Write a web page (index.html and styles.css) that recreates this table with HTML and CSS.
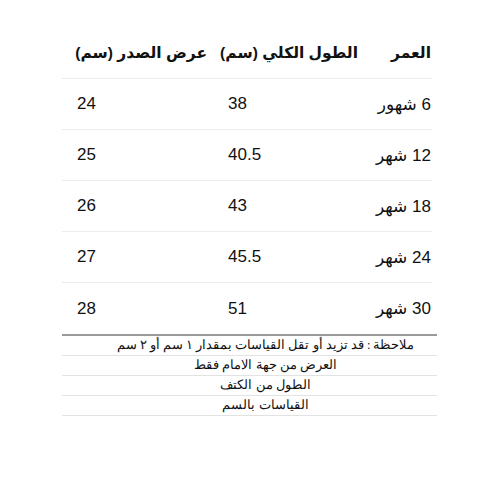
FILE: index.html
```html
<!DOCTYPE html>
<html lang="ar">
<head>
<meta charset="utf-8">
<link rel="stylesheet" href="styles.css">
</head>
<body>
<div class="page">
  <div class="sizes">
    <div class="row head">
      <div class="c1 ar">عرض الصدر (سم)</div>
      <div class="c2 ar">الطول الكلي (سم)</div>
      <div class="c3 ar">العمر</div>
    </div>
    <div class="row">
      <div class="c1">24</div>
      <div class="c2">38</div>
      <div class="c3 ar">6 شهور</div>
    </div>
    <div class="row">
      <div class="c1">25</div>
      <div class="c2">40.5</div>
      <div class="c3 ar">12 شهر</div>
    </div>
    <div class="row">
      <div class="c1">26</div>
      <div class="c2">43</div>
      <div class="c3 ar">18 شهر</div>
    </div>
    <div class="row">
      <div class="c1">27</div>
      <div class="c2">45.5</div>
      <div class="c3 ar">24 شهر</div>
    </div>
    <div class="row last">
      <div class="c1">28</div>
      <div class="c2">51</div>
      <div class="c3 ar">30 شهر</div>
    </div>
  </div>
  <div class="notes" dir="rtl">
    <div class="note">ملاحظة : قد تزيد أو تقل القياسات بمقدار ١ سم أو ٢ سم</div>
    <div class="note">العرض من جهة الامام فقط</div>
    <div class="note">الطول من الكتف</div>
    <div class="note">القياسات بالسم</div>
  </div>
</div>
</body>
</html>
```
FILE: styles.css
```css
html, body {
  margin: 0;
  padding: 0;
  background: #ffffff;
}
.page {
  padding: 28px 0 0 62px;
  width: 375px;
}
.sizes {
  width: 370px;
  font-family: "Liberation Sans", "DejaVu Sans", sans-serif;
  font-size: 17px;
  color: #111;
}
.row {
  display: grid;
  grid-template-columns: 151px 151px 68px;
  height: 50px;
  align-items: center;
  border-bottom: 1px solid #ececec;
}
.row.last {
  border-bottom: none;
  height: 51px;
}
.head {
  font-weight: bold;
  font-size: 15.5px;
  white-space: nowrap;
}
.c1, .c2 {
  padding-left: 15px;
  padding-right: 6px;
}
.c3 {
  padding-right: 1px;
}
.ar {
  direction: rtl;
  text-align: right;
}
.c1:not(.ar), .c2:not(.ar) {
  text-align: left;
}
.notes {
  width: 375px;
  border-top: 2px solid #9a9a9a;
  font-family: "Liberation Serif", "DejaVu Serif", serif;
  font-size: 12.5px;
  color: #111;
}
.note {
  height: 19px;
  line-height: 19px;
  padding-left: 32px;
  text-align: center;
  border-bottom: 1px solid #e2e2e2;
}
```
